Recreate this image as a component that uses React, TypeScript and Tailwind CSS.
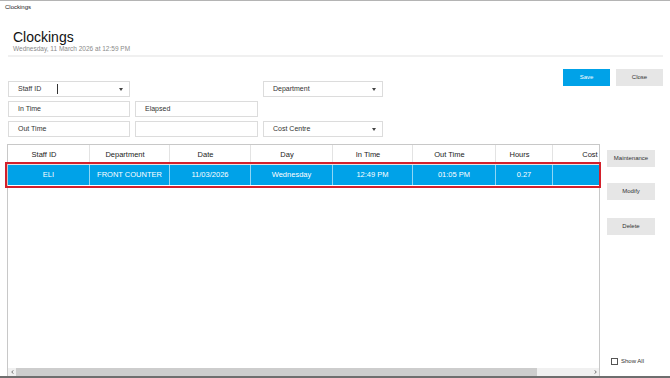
import React from "react";

const Caret = () => (
  <svg width="4" height="3" viewBox="0 0 4 3" className="shrink-0">
    <path d="M0 0 L4 0 L2 3 Z" fill="#444" />
  </svg>
);

function Field({ label, combo, caret }: { label?: string; combo?: boolean; caret?: boolean }) {
  return (
    <div className="h-[16px] border border-[#dcdcdc] bg-white flex items-center pl-[9px] pr-[6px] text-[7px] text-[#333]">
      <span className="whitespace-nowrap">{label}</span>
      {caret && <div className="ml-[16px] w-px h-[10px] bg-[#333]" />}
      {combo && (
        <div className="ml-auto">
          <Caret />
        </div>
      )}
    </div>
  );
}

const cols = [
  { h: "Staff ID", d: "ELI", w: "w-[82px]" },
  { h: "Department", d: "FRONT COUNTER", w: "w-[80px]" },
  { h: "Date", d: "11/03/2026", w: "w-[81px]" },
  { h: "Day", d: "Wednesday", w: "w-[82px]" },
  { h: "In Time", d: "12:49 PM", w: "w-[80px]" },
  { h: "Out Time", d: "01:05 PM", w: "w-[83px]" },
  { h: "Hours", d: "0.27", w: "w-[57px]" },
  { h: "Cost", d: "", w: "w-[84px]" },
];

function Btn({ children, blue }: { children: React.ReactNode; blue?: boolean }) {
  return (
    <div
      className={
        "h-[17px] w-[47px] flex items-center justify-center text-[6px] " +
        (blue ? "bg-[#00a2e8] text-white" : "bg-[#e6e6e6] text-[#333]")
      }
    >
      {children}
    </div>
  );
}

function SideBtn({ children, className }: { children: React.ReactNode; className?: string }) {
  return (
    <div
      className={
        "h-[17px] w-[48px] flex items-center justify-center text-[6px] bg-[#e6e6e6] text-[#333] " +
        (className || "")
      }
    >
      {children}
    </div>
  );
}

export default function App() {
  return (
    <div className="w-[670px] h-[378px] bg-white border-t border-[#b4b4b4] border-b-2 border-b-[#6e6e6e] flex flex-col overflow-hidden font-['Liberation_Sans',Arial,sans-serif]">
      <div className="h-[13px] pl-[5px] text-[6px] leading-[13px] text-[#222]">Clockings</div>
      <div className="pl-[13px] mt-[15px]">
        <div className="text-[14px] leading-[16px] text-[#111]">Clockings</div>
        <div className="text-[6.5px] leading-[8px] text-[#8a8a8a]">Wednesday, 11 March 2026 at 12:59 PM</div>
      </div>
      <div className="ml-[8px] mr-[7px] mt-[2px] h-[2px] bg-[#f0f0f0]" />

      <div className="mt-[12px] flex">
        <div className="pl-[8px] pt-[12px] grid grid-cols-[122px_123px_120px] gap-x-[5px] gap-y-[4px]">
          <Field label="Staff ID" combo caret />
          <div />
          <Field label="Department" combo />
          <Field label="In Time" />
          <Field label="Elapsed" />
          <div />
          <Field label="Out Time" />
          <Field />
          <Field label="Cost Centre" combo />
        </div>
        <div className="ml-auto pr-[7px] flex gap-[6px]">
          <Btn blue>Save</Btn>
          <Btn>Close</Btn>
        </div>
      </div>

      <div className="mt-[7px] flex-1 min-h-0 flex">
        <div className="relative ml-[7px] w-[593px] h-full">
          <div className="h-full border border-b-0 border-[#c8c8c8] flex flex-col overflow-hidden">
            <div className="h-[20px] flex shrink-0 border-b border-[#e3e3e3]">
              {cols.map((c, i) => (
                <div
                  key={i}
                  className={
                    c.w +
                    " shrink-0 h-full border-r border-[#e3e3e3] flex items-center justify-center pr-[9px] text-[7.5px] text-[#222] whitespace-nowrap"
                  }
                >
                  {c.h}
                </div>
              ))}
            </div>
            <div className="h-[20px] flex shrink-0 bg-[#00a2e8]">
              {cols.map((c, i) => (
                <div
                  key={i}
                  className={
                    c.w +
                    " shrink-0 h-full border-r border-[#8fd6f5] flex items-center justify-center text-[7.5px] text-white whitespace-nowrap"
                  }
                >
                  {c.d}
                </div>
              ))}
            </div>
            <div className="flex-1" />
            <div className="h-[8px] shrink-0 flex bg-[#f0f0f0]">
              <div className="w-[8px] flex items-center justify-center">
                <svg width="3" height="4" viewBox="0 0 3 4">
                  <path d="M2.5 0.3 L0.7 2 L2.5 3.7" stroke="#555" strokeWidth="0.8" fill="none" />
                </svg>
              </div>
              <div className="w-[521px] bg-[#cdcdcd]" />
              <div className="flex-1" />
              <div className="w-[8px] flex items-center justify-center">
                <svg width="3" height="4" viewBox="0 0 3 4">
                  <path d="M0.5 0.3 L2.3 2 L0.5 3.7" stroke="#555" strokeWidth="0.8" fill="none" />
                </svg>
              </div>
            </div>
          </div>
          <div className="absolute left-[-2px] top-[18px] w-[596px] h-[26px] border-2 border-[#d3202b] pointer-events-none" />
        </div>

        <div className="ml-[7px] w-[50px] flex flex-col">
          <SideBtn className="mt-[6px]">Maintenance</SideBtn>
          <SideBtn className="mt-[16px]">Modify</SideBtn>
          <SideBtn className="mt-[18px]">Delete</SideBtn>
          <div className="mt-auto mb-[10px] ml-[4px] flex items-center gap-[3px]">
            <div className="w-[7px] h-[7px] border border-[#555] bg-white" />
            <span className="text-[6px] text-[#333] whitespace-nowrap">Show All</span>
          </div>
        </div>
      </div>
    </div>
  );
}
